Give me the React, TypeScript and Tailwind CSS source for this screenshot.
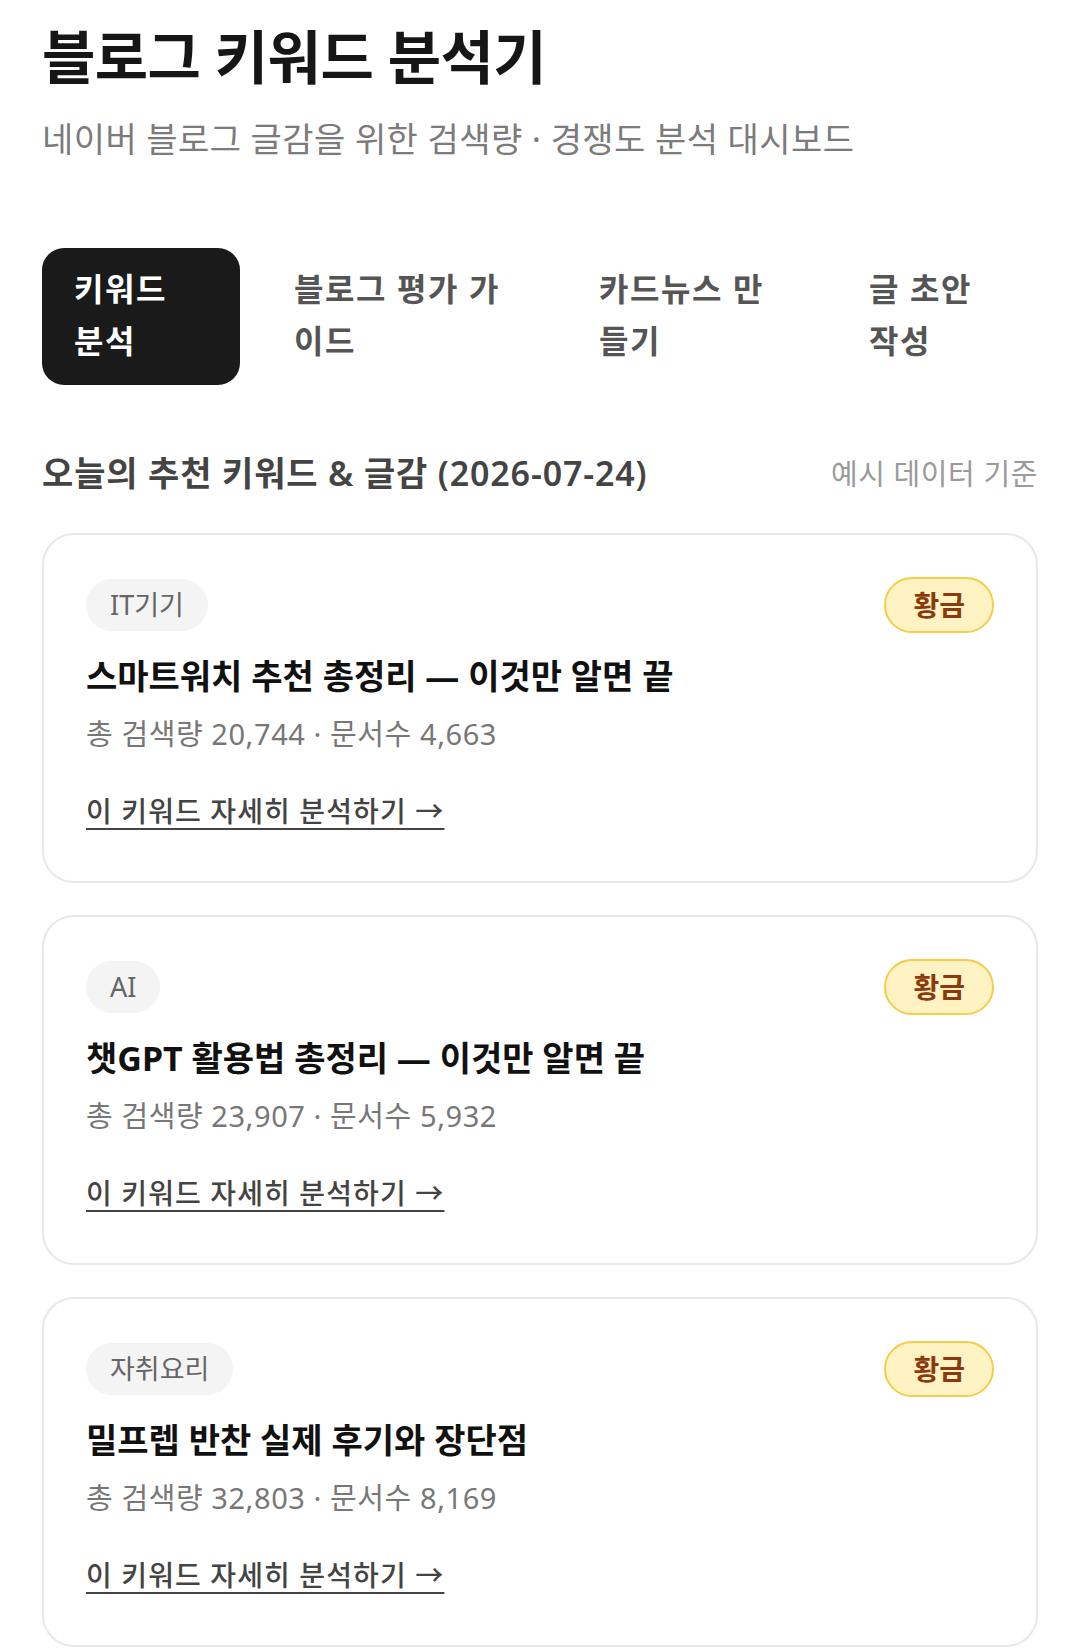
import { useState } from 'react';

// Tab labels are split the way they wrap in the narrow mobile layout
const tabs = [
  { id: 'keyword', lines: ['키워드', '분석'] },
  { id: 'guide', lines: ['블로그 평가 가', '이드'] },
  { id: 'cardnews', lines: ['카드뉴스 만', '들기'] },
  { id: 'draft', lines: ['글 초안', '작성'] },
];

const recommendations = [
  {
    id: 1,
    category: 'IT기기',
    grade: '황금',
    title: '스마트워치 추천 총정리 — 이것만 알면 끝',
    searchVolume: 20744,
    docCount: 4663,
  },
  {
    id: 2,
    category: 'AI',
    grade: '황금',
    title: '챗GPT 활용법 총정리 — 이것만 알면 끝',
    searchVolume: 23907,
    docCount: 5932,
  },
  {
    id: 3,
    category: '자취요리',
    grade: '황금',
    title: '밀프렙 반찬 실제 후기와 장단점',
    searchVolume: 32803,
    docCount: 8169,
  },
];

function KeywordCard({ item }: { item: (typeof recommendations)[number] }) {
  return (
    <div className="rounded-[32px] border-2 border-[#e8e8e8] bg-white px-[42px] pt-[42px] pb-[51px]">
      <div className="flex items-center justify-between">
        <span className="rounded-full bg-[#f4f4f4] px-[24px] text-[27px] leading-[52px] text-[#666]">
          {item.category}
        </span>
        <span className="rounded-full border-2 border-[#f5cd4b] bg-[#fff3c4] px-[27px] text-[28px] font-bold leading-[52px] text-[#8b3a0e]">
          {item.grade}
        </span>
      </div>
      <h3 className="mt-[21px] text-[34px] font-bold leading-[45px] text-[#111]">{item.title}</h3>
      <p className="mt-[15px] text-[29px] leading-[39px] tracking-[0.02em] text-[#777]">
        총 검색량 {item.searchVolume.toLocaleString('en-US')} · 문서수 {item.docCount.toLocaleString('en-US')}
      </p>
      <a
        href="#"
        className="mt-[39px] inline-block text-[28px] font-medium leading-[38px] tracking-[0.04em] text-[#444] underline decoration-2 underline-offset-[6px]"
      >
        이 키워드 자세히 분석하기 →
      </a>
    </div>
  );
}

export default function App() {
  const [activeTab, setActiveTab] = useState('keyword');

  return (
    <div
      className="min-h-screen bg-white px-[42px] pt-[22px]"
      style={{ fontFamily: '"Noto Sans", "Noto Sans CJK KR", sans-serif' }}
    >
      <h1 className="text-[58px] font-bold leading-[70px] tracking-[-0.01em] text-[#161616]">블로그 키워드 분석기</h1>
      <p className="mt-[25px] text-[34px] leading-[45px] tracking-[0.012em] text-[#7b7b7b]">
        네이버 블로그 글감을 위한 검색량 · 경쟁도 분석 대시보드
      </p>

      <nav className="mt-[86px] grid grid-cols-[198px_283px_248px_201px] gap-[22px]">
        {tabs.map((tab) => (
          <button
            key={tab.id}
            onClick={() => setActiveTab(tab.id)}
            className={
              activeTab === tab.id
                ? 'rounded-[22px] bg-[#1a1a1a] px-[32px] pt-[15px] pb-[18px] text-left text-[32px] font-semibold leading-[52px] tracking-[0.05em] text-white'
                : 'rounded-[22px] bg-transparent px-[32px] pt-[15px] pb-[18px] text-left text-[32px] font-semibold leading-[52px] tracking-[0.05em] text-[#555]'
            }
          >
            {tab.lines.map((line) => (
              <span key={line} className="block whitespace-nowrap">
                {line}
              </span>
            ))}
          </button>
        ))}
      </nav>

      <div className="mt-[66px] flex items-center justify-between">
        <h2 className="text-[34px] font-semibold leading-[45px] tracking-[0.025em] text-[#444]">
          오늘의 추천 키워드 &amp; 글감 (2026-07-24)
        </h2>
        <span className="text-[29px] leading-[40px] tracking-[0.02em] text-[#9a9a9a]">예시 데이터 기준</span>
      </div>

      <div className="mt-[37px] flex flex-col gap-[32px]">
        {recommendations.map((item) => (
          <KeywordCard key={item.id} item={item} />
        ))}
      </div>
    </div>
  );
}
